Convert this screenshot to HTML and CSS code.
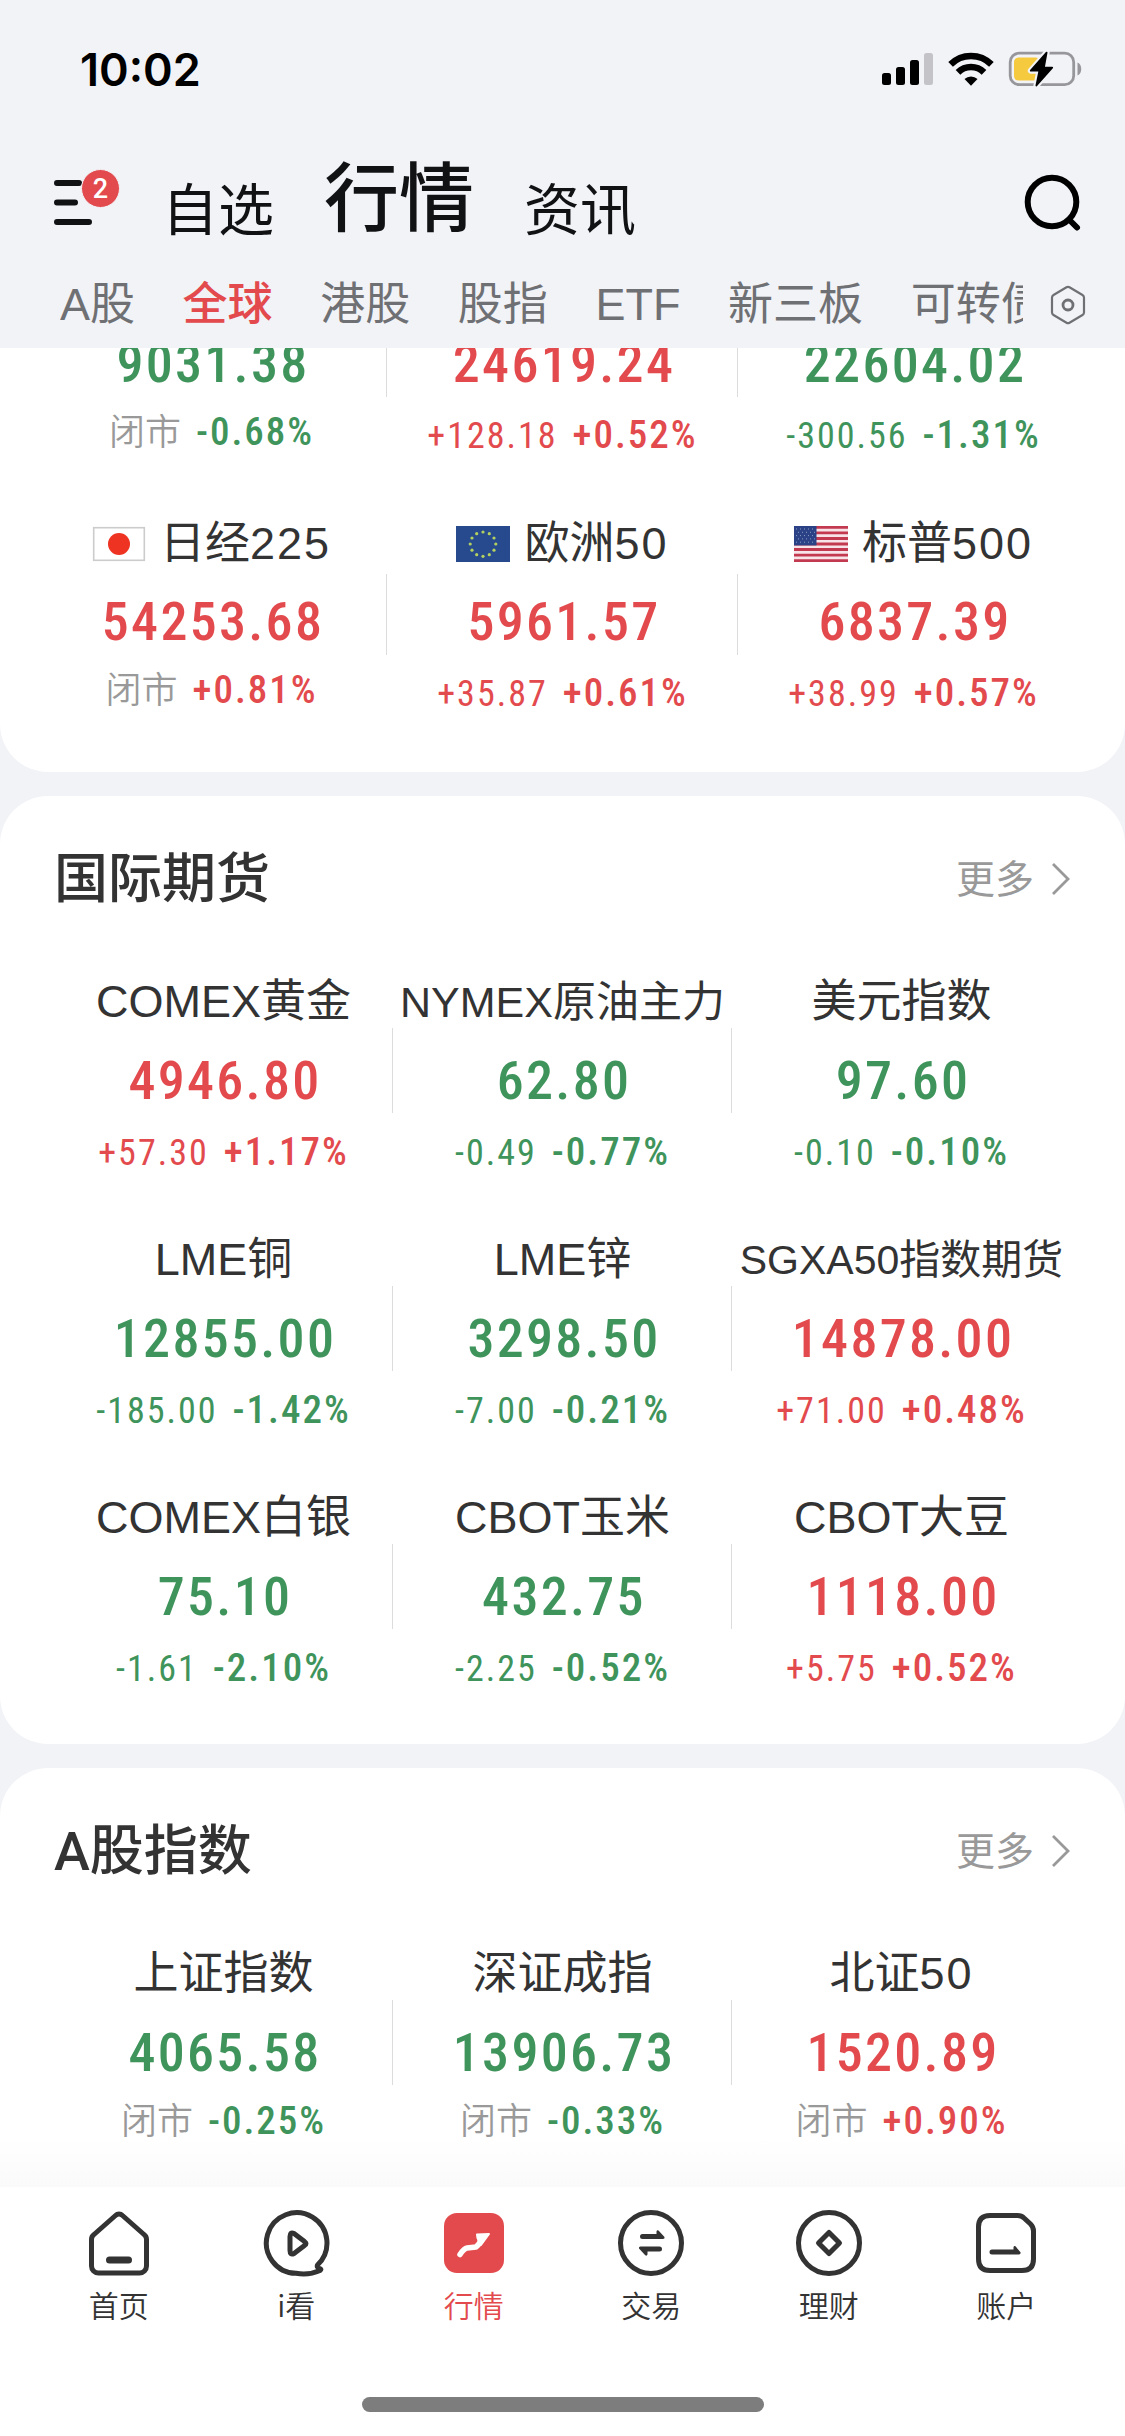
FILE: index.html
```html
<!DOCTYPE html>
<html lang="zh-CN">
<head>
    <meta charset="UTF-8">
    <meta name="viewport" content="width=device-width, initial-scale=1.0">
    <title>行情</title>
    <link rel="stylesheet" href="styles.css">
</head>
<body>
    <header class="header">
        <div class="status-bar">
            <span class="time">10:02</span>
            <div class="status-icons">
                <svg width="52" height="34" viewBox="0 0 52 34">
                    <rect x="0" y="21" width="9" height="12" rx="2.5"/>
                    <rect x="14" y="15" width="9" height="18" rx="2.5"/>
                    <rect x="28" y="8" width="9" height="25" rx="2.5"/>
                    <rect x="42" y="1" width="9" height="32" rx="2.5" fill="#c4c4c8"/>
                </svg>
                <svg class="wifi" width="46" height="34" viewBox="0 0 46 34">
                    <g fill="none" stroke="#000" stroke-width="6.6">
                        <path d="M2.6 12.4a29 29 0 0 1 40.8 0"/>
                        <path d="M10 20.3a18.5 18.5 0 0 1 26 0"/>
                    </g>
                    <path d="M16.5 27a9.5 9.5 0 0 1 13 0L23 33.7z"/>
                </svg>
                <svg class="battery" width="75" height="36" viewBox="0 0 75 36">
                    <rect x="2.2" y="2.2" width="63.5" height="31.5" rx="9" fill="none" stroke="#97979b" stroke-width="2.8"/>
                    <rect x="6" y="6.5" width="26" height="23" rx="4.5" fill="#f5ca3f"/>
                    <path d="M69.5 11.5c5 2 5 11 0 13z" fill="#97979b"/>
                    <path d="M38.6 1.6 22.8 19.7h8.6L28.4 34.5 44.2 16.6h-8.3z" stroke="#f2f3f7" stroke-width="6" stroke-linejoin="round"/>
                    <path d="M38.6 1.6 22.8 19.7h8.6L28.4 34.5 44.2 16.6h-8.3z" stroke="#000" stroke-width="1.8" stroke-linejoin="round"/>
                </svg>
            </div>
        </div>

        <div class="title-bar">
            <div class="menu">
                <svg width="40" height="47" viewBox="0 0 40 47">
                    <g stroke="#111214" stroke-width="6" stroke-linecap="round">
                        <path d="M3 4h22M3 23.500h18M3 43h32"/>
                    </g>
                </svg>
                <span class="badge">2</span>
            </div>
            <nav class="main-tabs">
                <a>自选</a>
                <a class="active">行情</a>
                <a>资讯</a>
            </nav>
            <svg class="search" width="60" height="60" viewBox="0 0 60 60" fill="none" stroke="#000" stroke-width="6" stroke-linecap="round">
                <circle cx="30" cy="30" r="24.300"/>
                <path d="M47.500 48 55 55.500"/>
            </svg>
        </div>

        <div class="sub-bar">
            <nav class="sub-tabs">
                <a>A股</a>
                <a class="active">全球</a>
                <a>港股</a>
                <a>股指</a>
                <a>ETF</a>
                <a>新三板</a>
                <a>可转债</a>
            </nav>
            <svg width="36" height="40" viewBox="0 0 36 40" fill="none" stroke="#6f7073">
                <path d="M16.500 2.300a3 3 0 0 1 3 0L32.500 10a3 3 0 0 1 1.500 2.500v15a3 3 0 0 1-1.500 2.500l-13 7.700a3 3 0 0 1-3 0l-13-7.700A3 3 0 0 1 2 27.500v-15A3 3 0 0 1 3.500 10z" stroke-width="2.200"/>
                <circle cx="18" cy="20" r="5" stroke-width="2.800"/>
            </svg>
        </div>
    </header>

    <main class="content">
        <section class="card card-global">
            <div class="quotes">
                <div class="quote down">
                    <div class="price">9031.38</div>
                    <div class="change closed"><i>闭市</i><b>-0.68%</b></div>
                </div>
                <div class="quote up">
                    <div class="price">24619.24</div>
                    <div class="change"><span>+128.18</span><b>+0.52%</b></div>
                </div>
                <div class="quote down">
                    <div class="price">22604.02</div>
                    <div class="change"><span>-300.56</span><b>-1.31%</b></div>
                </div>
                <div class="quote up">
                    <div class="name">
                        <svg class="flag" width="54" height="36" viewBox="0 0 54 36">
                            <rect x="1.700" y="1.700" width="50.600" height="32.600" fill="#fff" stroke="#ccc" stroke-width="1.600"/>
                            <circle cx="27" cy="18" r="11" fill="#ee3322"/>
                        </svg>日经<em>225</em>
                    </div>
                    <div class="price">54253.68</div>
                    <div class="change closed"><i>闭市</i><b>+0.81%</b></div>
                </div>
                <div class="quote up">
                    <div class="name">
                        <svg class="flag" width="54" height="36" viewBox="0 0 54 36">
                            <rect width="54" height="36" fill="#264a8d"/>
                            <g fill="#b4d15f">
                                <circle cx="27" cy="6" r="1.600"/><circle cx="33.300" cy="7.700" r="1.600"/>
                                <circle cx="38" cy="12" r="1.600"/><circle cx="39.800" cy="18" r="1.600"/>
                                <circle cx="38" cy="24.200" r="1.600"/><circle cx="33.300" cy="28.700" r="1.600"/>
                                <circle cx="27" cy="30.300" r="1.600"/><circle cx="20.700" cy="28.700" r="1.600"/>
                                <circle cx="16" cy="24.200" r="1.600"/><circle cx="14.200" cy="18" r="1.600"/>
                                <circle cx="16" cy="12" r="1.600"/><circle cx="20.700" cy="7.700" r="1.600"/>
                            </g>
                        </svg>欧洲<em>50</em>
                    </div>
                    <div class="price">5961.57</div>
                    <div class="change"><span>+35.87</span><b>+0.61%</b></div>
                </div>
                <div class="quote up">
                    <div class="name">
                        <svg class="flag" width="54" height="36" viewBox="0 0 54 36">
                            <rect width="54" height="36" fill="#f6e4e8"/>
                            <path d="M0 1.400h54M0 6.900h54M0 12.500h54M0 18h54M0 23.500h54M0 29.100h54M0 34.600h54" stroke="#c33a50" stroke-width="2.770"/>
                            <rect width="22.500" height="19.400" fill="#2b4386"/>
                            <path d="M2 3h19M4 6.300h17M2 9.600h19M4 12.900h17M2 16.200h19" stroke="#8f9dc4" stroke-width="1" stroke-dasharray="1 3"/>
                        </svg>标普<em>500</em>
                    </div>
                    <div class="price">6837.39</div>
                    <div class="change"><span>+38.99</span><b>+0.57%</b></div>
                </div>
            </div>
        </section>

        <section class="card">
            <div class="card-head">
                <h2>国际期货</h2>
                <a class="more">更多
                    <svg width="20" height="34" viewBox="0 0 20 34" fill="none" stroke="#999" stroke-width="2.800"><path d="M2 2l15 15L2 32"/></svg>
                </a>
            </div>
            <div class="quotes">
                <div class="quote up">
                    <div class="name">COMEX黄金</div>
                    <div class="price">4946.80</div>
                    <div class="change"><span>+57.30</span><b>+1.17%</b></div>
                </div>
                <div class="quote down">
                    <div class="name name-md">NYMEX原油主力</div>
                    <div class="price">62.80</div>
                    <div class="change"><span>-0.49</span><b>-0.77%</b></div>
                </div>
                <div class="quote down">
                    <div class="name">美元指数</div>
                    <div class="price">97.60</div>
                    <div class="change"><span>-0.10</span><b>-0.10%</b></div>
                </div>
                <div class="quote down">
                    <div class="name">LME铜</div>
                    <div class="price">12855.00</div>
                    <div class="change"><span>-185.00</span><b>-1.42%</b></div>
                </div>
                <div class="quote down">
                    <div class="name">LME锌</div>
                    <div class="price">3298.50</div>
                    <div class="change"><span>-7.00</span><b>-0.21%</b></div>
                </div>
                <div class="quote up">
                    <div class="name name-sm">SGXA50指数期货</div>
                    <div class="price">14878.00</div>
                    <div class="change"><span>+71.00</span><b>+0.48%</b></div>
                </div>
                <div class="quote down">
                    <div class="name">COMEX白银</div>
                    <div class="price">75.10</div>
                    <div class="change"><span>-1.61</span><b>-2.10%</b></div>
                </div>
                <div class="quote down">
                    <div class="name">CBOT玉米</div>
                    <div class="price">432.75</div>
                    <div class="change"><span>-2.25</span><b>-0.52%</b></div>
                </div>
                <div class="quote up">
                    <div class="name">CBOT大豆</div>
                    <div class="price">1118.00</div>
                    <div class="change"><span>+5.75</span><b>+0.52%</b></div>
                </div>
            </div>
        </section>

        <section class="card card-last">
            <div class="card-head">
                <h2>A股指数</h2>
                <a class="more">更多
                    <svg width="20" height="34" viewBox="0 0 20 34" fill="none" stroke="#999" stroke-width="2.800"><path d="M2 2l15 15L2 32"/></svg>
                </a>
            </div>
            <div class="quotes">
                <div class="quote down">
                    <div class="name">上证指数</div>
                    <div class="price">4065.58</div>
                    <div class="change closed"><i>闭市</i><b>-0.25%</b></div>
                </div>
                <div class="quote down">
                    <div class="name">深证成指</div>
                    <div class="price">13906.73</div>
                    <div class="change closed"><i>闭市</i><b>-0.33%</b></div>
                </div>
                <div class="quote up">
                    <div class="name">北证<em>50</em></div>
                    <div class="price">1520.89</div>
                    <div class="change closed"><i>闭市</i><b>+0.90%</b></div>
                </div>
            </div>
        </section>
    </main>

    <footer class="tab-bar">
        <nav class="tabs">
            <a>
                <svg width="72" height="72" viewBox="0 0 72 72" fill="none" stroke="#333" stroke-width="5" stroke-linejoin="round" stroke-linecap="round">
                    <path d="M32.500 8.500a5 5 0 0 1 7 0L61 27.500a6 6 0 0 1 2.500 5V59a7 7 0 0 1-7 7h-41a7 7 0 0 1-7-7V32.500a6 6 0 0 1 2.500-5z"/>
                    <path d="M26.500 53h19" stroke-width="7"/>
                </svg>
                首页
            </a>
            <a>
                <svg width="72" height="72" viewBox="0 0 72 72" fill="none" stroke="#333" stroke-width="5" stroke-linejoin="round" stroke-linecap="round">
                    <path d="M57.500 58A30.300 30.300 0 1 0 36 66.300Q49 68.500 60 63.500 62 62 59.500 61.500 56.500 60.500 57.500 58z"/>
                    <path d="M30 29.500q0-5 4-3l10.500 8q3 2 0 4l-10.500 8q-4 2-4-3z"/>
                </svg>
                i看
            </a>
            <a class="active">
                <svg width="72" height="72" viewBox="0 0 72 72">
                    <rect x="6" y="6" width="60" height="60" rx="13" fill="#e34a4d"/>
                    <path d="M22 47.500q4-6 7-6.500l9-1q4-3 5.500-9" fill="none" stroke="#fff" stroke-width="5.500" stroke-linecap="round" stroke-linejoin="round"/>
                    <path d="M39 27.500 51 27 43 38l-3.500-7z" fill="#fff" stroke="#fff" stroke-width="2" stroke-linejoin="round"/>
                </svg>
                行情
            </a>
            <a>
                <svg width="72" height="72" viewBox="0 0 72 72">
                    <circle cx="36" cy="36" r="30.500" fill="none" stroke="#333" stroke-width="5"/>
                    <path d="M27.500 27h14v-2.500q.5-2 2-1l6 6.500q.5 2-1.500 2H27.500a2.500 2.500 0 0 1 0-5zM44.500 44.500h-12v3q-.8 2-2.500.5l-6-6.500q-.5-2 1.500-2h19a2.500 2.500 0 0 1 0 5z" fill="#333"/>
                </svg>
                交易
            </a>
            <a>
                <svg width="72" height="72" viewBox="0 0 72 72" fill="none" stroke="#333" stroke-width="5" stroke-linejoin="round">
                    <circle cx="36" cy="36" r="30.500"/>
                    <path d="M36 25.500 46.500 36 36 46.500 25.500 36z"/>
                </svg>
                理财
            </a>
            <a>
                <svg width="72" height="72" viewBox="0 0 72 72">
                    <path d="M20 8.500h27.500q4 0 6.500 2.500l6.500 6q3 3 3 7V52q0 11.500-11.500 11.500H20Q8.500 63.500 8.500 52V20Q8.500 8.500 20 8.500z" fill="none" stroke="#333" stroke-width="5"/>
                    <path d="M22 42.500h21.500v-2.200q.5-2 2-1l5 6q.5 2-1.500 2.200H22a2.500 2.500 0 0 1 0-5z" fill="#333"/>
                </svg>
                账户
            </a>
        </nav>
        <div class="home-indicator"></div>
    </footer>
</body>
</html>
```
FILE: styles.css
```css
* {
    box-sizing: border-box;
}
body {
    display: flex;
    flex-direction: column;
    width: 1125px;
    height: 2436px;
    margin: 0;
    overflow: hidden;
    background-color: #f2f3f7;
    color: #333;
    font-family: "Liberation Sans", "Noto Sans CJK SC", sans-serif;
}
svg {
    display: block;
    flex: none;
}
h2 {
    margin: 0;
}
i, em, b {
    font-style: normal;
    font-weight: inherit;
}

/* Header */
.header {
    flex: none;
    height: 348px;
}
.status-bar {
    display: flex;
    justify-content: space-between;
    align-items: center;
    height: 138px;
    padding: 0 42px 0 80px;
    color: #000;
}
.time {
    font-family: Inter, sans-serif;
    font-size: 45px;
    font-weight: 600;
}
.status-icons {
    display: flex;
    align-items: center;
}
.wifi {
    margin-left: 14px;
}
.battery {
    margin-left: 14px;
}
.title-bar {
    display: flex;
    align-items: center;
    height: 126px;
    padding: 2px 43px 0 54px;
}
.menu {
    position: relative;
    width: 108px;
}
.badge {
    position: absolute;
    top: -10px;
    left: 27px;
    width: 39px;
    height: 39px;
    border: 1px solid #f2f3f7;
    border-radius: 50%;
    background-color: #e34a4d;
    color: #fff;
    font-family: Roboto, sans-serif;
    font-size: 27px;
    font-weight: 500;
    line-height: 38px;
    text-align: center;
}
.main-tabs {
    display: flex;
    align-items: center;
    flex: 1;
    gap: 50px;
    color: #111214;
    font-family: "Noto Sans CJK SC", sans-serif;
    font-size: 56px;
    line-height: 100px;
}
.main-tabs a {
    padding-top: 7px;
}
.main-tabs .active {
    padding: 0 0 18px;
    font-size: 75px;
    font-weight: 500;
}
.sub-bar {
    display: flex;
    align-items: center;
    justify-content: space-between;
    height: 80px;
    padding: 2px 39px 0 60px;
}
.sub-tabs {
    display: flex;
    gap: 47.6px;
    width: 963px;
    overflow: hidden;
    color: #6f7073;
    font-size: 45px;
    line-height: 70px;
    white-space: nowrap;
}
.sub-tabs .active {
    color: #e34a4d;
    font-weight: 500;
}

/* Cards */
.content {
    flex: none;
    height: 1839px;
    overflow: hidden;
}
.card {
    margin-bottom: 24px;
    padding: 0 54px 55px;
    border-radius: 48px;
    background-color: #fff;
}
.card-head {
    display: flex;
    align-items: center;
    justify-content: space-between;
    height: 166px;
    margin-bottom: 9px;
}
.card-head h2 {
    padding-top: 2px;
    font-family: Roboto, "Noto Sans CJK SC", sans-serif;
    font-size: 54px;
    font-weight: 500;
    line-height: 60px;
}
.more {
    display: flex;
    align-items: center;
    gap: 17px;
    padding-bottom: 6px;
    color: #999;
    font-family: "Noto Sans CJK SC", sans-serif;
    font-size: 39px;
    line-height: 46px;
}
.more svg {
    margin-top: 6px;
}
.quotes {
    display: grid;
    grid-template-columns: repeat(3, 1fr);
    row-gap: 56px;
}
.quote {
    min-width: 0;
    text-align: center;
    white-space: nowrap;
}
.up {
    color: #e34a4d;
}
.down {
    color: #3f945c;
}
.name {
    display: flex;
    align-items: center;
    justify-content: center;
    height: 57px;
    padding-top: 5px;
    color: #333;
    font-size: 45px;
    line-height: 54px;
}
.name em {
    letter-spacing: 2px;
}
.name-md {
    font-size: 43px;
}
.name-sm {
    font-size: 41px;
}
.flag {
    margin-right: 14px;
}
.price {
    height: 85px;
    margin-left: -1px;
    padding: 20px 0 0 3px;
    border-left: 1px solid #dcdcdc;
    font-family: Roboto, sans-serif;
    font-size: 54px;
    font-weight: 500;
    font-stretch: 85%;
    line-height: 65px;
    letter-spacing: 2.3px;
}
.quote:nth-child(3n+1) .price {
    border-left-color: transparent;
}
.change {
    display: flex;
    align-items: baseline;
    justify-content: center;
    gap: 15px;
    height: 60px;
    padding-top: 18px;
    font-family: Roboto, "Noto Sans CJK SC", sans-serif;
    font-size: 36px;
    font-stretch: 85%;
    line-height: 43px;
    letter-spacing: 2px;
}
.change span {
    font-weight: 450;
}
.change b {
    font-size: 39px;
    font-weight: 460;
}
.change i {
    color: #999;
    font-size: 36px;
    font-weight: 350;
    letter-spacing: 0;
}
.closed {
    padding-top: 15px;
}
.closed b {
    font-weight: 500;
}

/* The first card is scrolled under the header */
.card-global {
    padding: 0 36px 58px;
    border-radius: 0 0 48px 48px;
}
.card-global .quotes {
    row-gap: 60px;
    margin-top: -32px;
}
.card-global .name {
    height: 58px;
    padding: 0 0 2px;
}
.card-global .price {
    height: 81px;
    padding-top: 15px;
}
.card-global .change {
    height: 59px;
    padding-top: 17px;
}
.card-global .closed {
    padding-top: 14px;
}
.card-last {
    min-height: 460px;
    margin-bottom: 0;
    border-radius: 48px 48px 0 0;
    background-image: linear-gradient(to bottom, #fff 370px, #fafafa 419px);
}

/* Bottom tabs */
.tab-bar {
    display: flex;
    flex-direction: column;
    align-items: center;
    justify-content: space-between;
    flex: 1;
    padding: 20px 30px 24px;
    background-color: #fff;
}
.tabs {
    display: flex;
    width: 100%;
}
.tabs a {
    display: flex;
    flex: 1;
    flex-direction: column;
    align-items: center;
    color: #333;
    font-family: "Noto Sans CJK SC", sans-serif;
    font-size: 30px;
    font-weight: 350;
    line-height: 51px;
}
.tabs .active {
    color: #e34a4d;
}
.home-indicator {
    width: 402px;
    height: 15px;
    border-radius: 8px;
    background-color: #7d7d7d;
}
```
